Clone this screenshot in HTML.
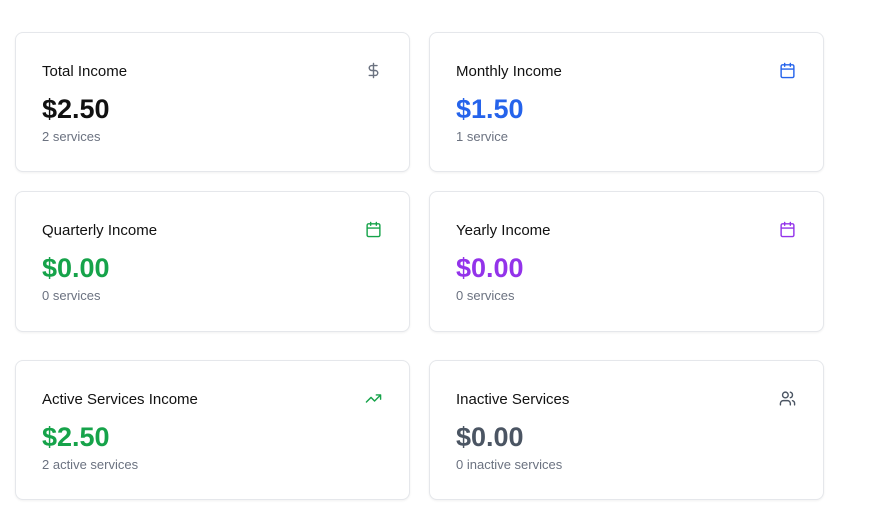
<!DOCTYPE html>
<html><head><style>
body{margin:0;width:889px;height:510px;background:#fff;font-family:"Liberation Sans",sans-serif;position:relative;overflow:hidden}
.c{position:absolute;width:395px;height:140px;border:1px solid #e5e7eb;border-radius:8px;box-shadow:0 1px 2px rgba(0,0,0,.06);box-sizing:border-box;background:#fff}
.t{position:absolute;left:26px;top:30px;font-size:15px;color:#111}
.v{position:absolute;left:26px;top:61px;font-size:27px;font-weight:bold;color:#111}
.s{position:absolute;left:26px;top:96px;font-size:13px;color:#6b7280}
.i{position:absolute;right:27px;top:29px;width:17px;height:17px}
</style></head><body>
<div class="c" style="left:15px;top:32px"><div class="t">Total Income</div><div class="v">$2.50</div><div class="s">2 services</div>
<svg class="i" viewBox="0 0 24 24" fill="none" stroke="#6b7280" stroke-width="2" stroke-linecap="round"><path d="M12 2v20M17 5H9.5a3.5 3.5 0 0 0 0 7h5a3.5 3.5 0 0 1 0 7H6"/></svg></div>
<div class="c" style="left:429px;top:32px"><div class="t">Monthly Income</div><div class="v" style="color:#2563eb">$1.50</div><div class="s">1 service</div>
<svg class="i" viewBox="0 0 24 24" fill="none" stroke="#2563eb" stroke-width="2" stroke-linecap="round"><rect x="3" y="4" width="18" height="18" rx="2"/><path d="M16 2v4M8 2v4M3 10h18"/></svg></div>
<div class="c" style="left:15px;top:191px;height:141px"><div class="t">Quarterly Income</div><div class="v" style="color:#16a34a">$0.00</div><div class="s">0 services</div>
<svg class="i" viewBox="0 0 24 24" fill="none" stroke="#16a34a" stroke-width="2" stroke-linecap="round"><rect x="3" y="4" width="18" height="18" rx="2"/><path d="M16 2v4M8 2v4M3 10h18"/></svg></div>
<div class="c" style="left:429px;top:191px;height:141px"><div class="t">Yearly Income</div><div class="v" style="color:#9333ea">$0.00</div><div class="s">0 services</div>
<svg class="i" viewBox="0 0 24 24" fill="none" stroke="#9333ea" stroke-width="2" stroke-linecap="round"><rect x="3" y="4" width="18" height="18" rx="2"/><path d="M16 2v4M8 2v4M3 10h18"/></svg></div>
<div class="c" style="left:15px;top:360px"><div class="t">Active Services Income</div><div class="v" style="color:#16a34a">$2.50</div><div class="s">2 active services</div>
<svg class="i" viewBox="0 0 24 24" fill="none" stroke="#16a34a" stroke-width="2" stroke-linecap="round" stroke-linejoin="round"><path d="M22 7l-8.5 8.5-5-5L2 17M16 7h6v6"/></svg></div>
<div class="c" style="left:429px;top:360px"><div class="t">Inactive Services</div><div class="v" style="color:#4b5563">$0.00</div><div class="s">0 inactive services</div>
<svg class="i" viewBox="0 0 24 24" fill="none" stroke="#4b5563" stroke-width="2" stroke-linecap="round"><path d="M16 21v-2a4 4 0 0 0-4-4H6a4 4 0 0 0-4 4v2"/><circle cx="9" cy="7" r="4"/><path d="M22 21v-2a4 4 0 0 0-3-3.87M16 3.13a4 4 0 0 1 0 7.75"/></svg></div>
</body></html>
